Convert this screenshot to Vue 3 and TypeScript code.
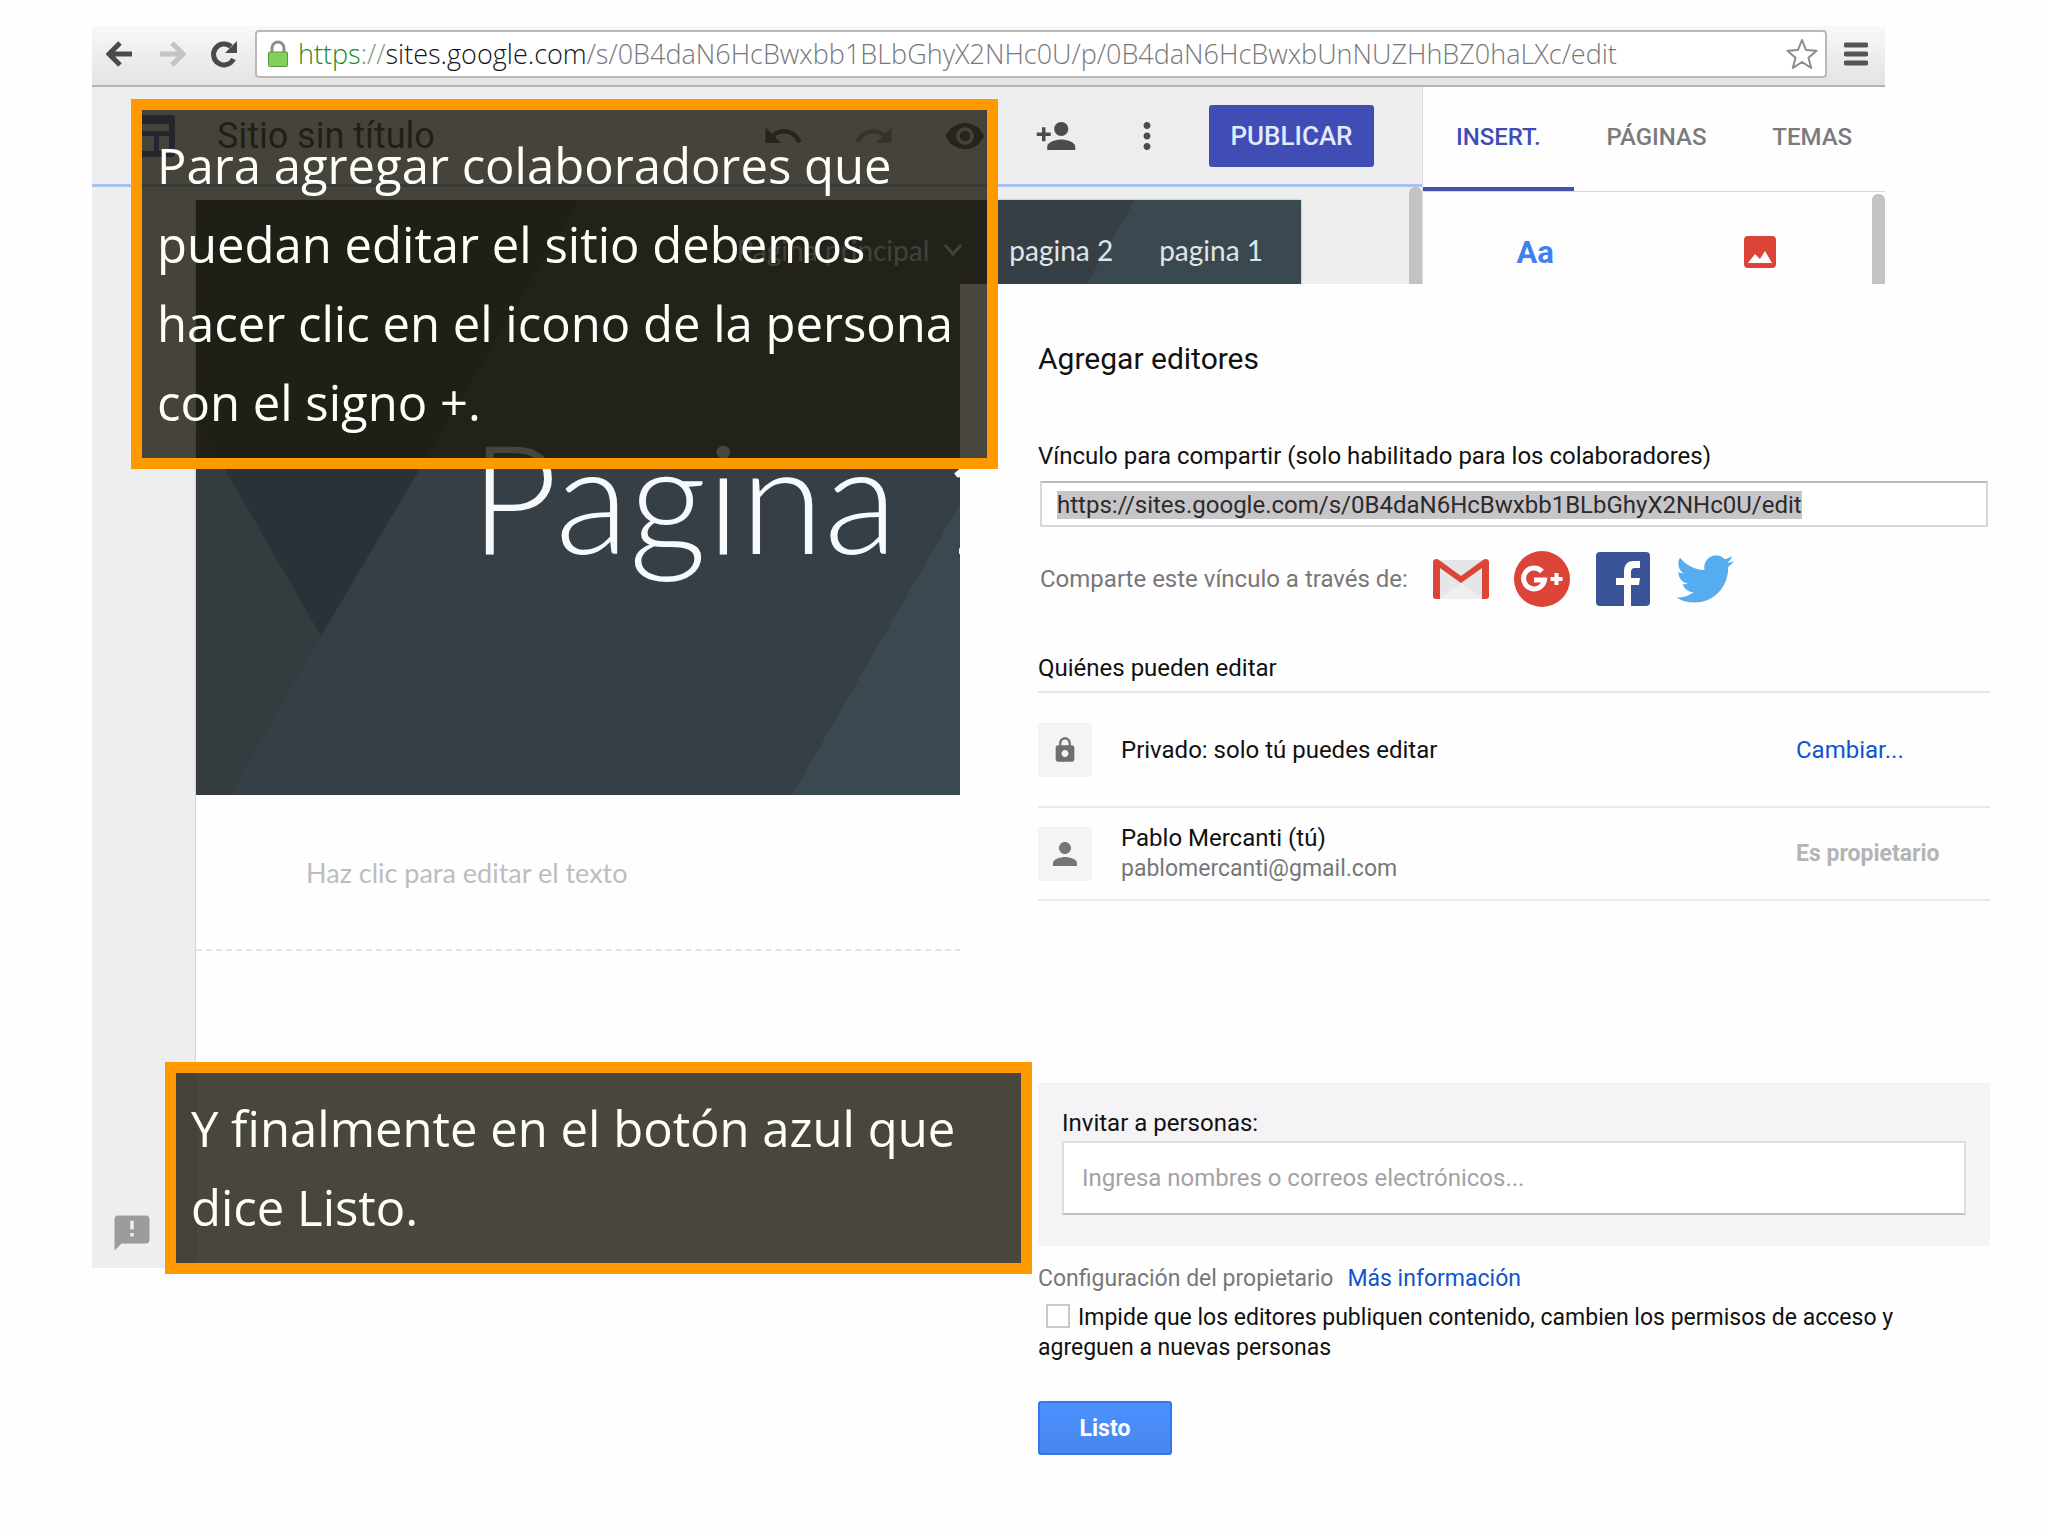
<script setup lang="ts">
import { onMounted, ref } from 'vue'

const shareUrl = ref('https://sites.google.com/s/0B4daN6HcBwxbb1BLbGhyX2NHc0U/edit')
const invitees = ref('')
const restrictEditors = ref(false)
const linkField = ref<HTMLInputElement | null>(null)

const tabs = ['INSERT.', 'PÁGINAS', 'TEMAS']
const activeTab = ref(tabs[0])

// The share link is preselected so that it can be copied straight away.
onMounted(() => {
  linkField.value?.focus()
  linkField.value?.select()
})
</script>

<template>
  <main class="slide">
    <section class="browser">
      <div class="chrome">
        <div class="history">
          <button aria-label="Atrás">
            <svg width="28" height="30" viewBox="0 0 28 30"><path d="M26 15H5M14 4 3 15l11 11" fill="none" stroke="#4a4a4a" stroke-width="5" /></svg>
          </button>
          <button aria-label="Adelante">
            <svg width="28" height="30" viewBox="0 0 28 30"><path d="M2 15h21M14 4l11 11-11 11" fill="none" stroke="#c4c4c4" stroke-width="5" /></svg>
          </button>
          <button aria-label="Volver a cargar">
            <svg width="28" height="30" viewBox="0 0 28 30"><path d="M21 7.500A10.500 10.500 0 1 0 23.500 20" fill="none" stroke="#4a4a4a" stroke-width="5" /><path d="M27 2v12H15z" fill="#4a4a4a" /></svg>
          </button>
        </div>
        <div class="address">
          <svg class="lock" width="22" height="28" viewBox="0 0 22 28">
            <path d="M5 13V8a6 6 0 0 1 12 0v5" fill="none" stroke="#8c8c8c" stroke-width="3" />
            <rect x="1.500" y="12" width="19" height="14.500" rx="1" fill="#83cf5b" stroke="#5a9a3c" />
          </svg>
          <span class="url"><span class="scheme">https</span><span class="sep">://</span><span class="host">sites.google.com</span>/s/0B4daN6HcBwxbb1BLbGhyX2NHc0U/p/0B4daN6HcBwxbUnNUZHhBZ0haLXc/edit</span>
          <svg class="star" width="34" height="34" viewBox="0 0 34 34"><path d="M17 3l4 10 10.500.700-8 7 2.700 10.300L17 25l-9.200 6 2.700-10.300-8-7L13 13z" fill="#fff" stroke="#8b8b8e" stroke-width="2" stroke-linejoin="round" /></svg>
        </div>
        <button aria-label="Menú">
          <svg width="24" height="24" viewBox="0 0 24 24"><path d="M2 3h20M2 12h20M2 21h20" stroke="#555" stroke-width="5" stroke-linecap="round" /></svg>
        </button>
      </div>

      <div class="app">
        <div class="editor">
          <header class="app-bar">
            <svg class="logo" width="42" height="42" viewBox="0 0 42 42">
              <path fill="#3f51b5" fill-rule="evenodd" d="M3 0h36a3 3 0 0 1 3 3v36a3 3 0 0 1-3 3H3a3 3 0 0 1-3-3V3a3 3 0 0 1 3-3zM5 9v7h31V9zM5 21v15h16V21zM26 21v15h10V21z" />
            </svg>
            <span class="site-name">Sitio sin título</span>
            <div class="tools">
              <button class="tool" aria-label="Deshacer">
                <svg viewBox="0 0 24 24"><path d="M12.500 8c-2.650 0-5.050.990-6.900 2.600L2 7v9h9l-3.620-3.620c1.390-1.160 3.160-1.880 5.120-1.880 3.540 0 6.550 2.310 7.600 5.500l2.370-.780C21.080 11.030 17.150 8 12.500 8z" /></svg>
              </button>
              <button class="tool faded" aria-label="Rehacer">
                <svg viewBox="0 0 24 24"><path d="M18.400 10.600C16.550 8.990 14.150 8 11.500 8c-4.650 0-8.580 3.030-9.960 7.220L3.900 16c1.050-3.190 4.050-5.500 7.600-5.500 1.950 0 3.730.720 5.120 1.880L13 16h9V7z" /></svg>
              </button>
              <button class="tool" aria-label="Vista previa">
                <svg viewBox="0 0 24 24"><path d="M12 4.500C7 4.500 2.730 7.610 1 12c1.730 4.390 6 7.500 11 7.500s9.270-3.110 11-7.500c-1.730-4.390-6-7.500-11-7.500zM12 17c-2.760 0-5-2.240-5-5s2.240-5 5-5 5 2.240 5 5-2.240 5-5 5zm0-8c-1.660 0-3 1.340-3 3s1.340 3 3 3 3-1.340 3-3-1.340-3-3-3z" /></svg>
              </button>
              <button class="tool" aria-label="Agregar editores">
                <svg viewBox="0 0 24 24"><path d="M15 12c2.210 0 4-1.790 4-4s-1.790-4-4-4-4 1.790-4 4 1.790 4 4 4zm-9-2V7H4v3H1v2h3v3h2v-3h3v-2H6zm9 4c-2.670 0-8 1.340-8 4v2h16v-2c0-2.660-5.330-4-8-4z" /></svg>
              </button>
              <button class="tool" aria-label="Más">
                <svg viewBox="0 0 24 24"><path d="M12 8c1.100 0 2-.900 2-2s-.900-2-2-2-2 .900-2 2 .900 2 2 2zm0 2c-1.100 0-2 .900-2 2s.900 2 2 2 2-.900 2-2-.900-2-2-2zm0 6c-1.100 0-2 .900-2 2s.900 2 2 2 2-.900 2-2-.900-2-2-2z" /></svg>
              </button>
            </div>
            <button class="publish">PUBLICAR</button>
          </header>

          <div class="canvas">
            <aside class="gutter">
              <button class="feedback" aria-label="Enviar comentarios">
                <svg width="42" height="42" viewBox="0 0 24 24"><path fill="#9b9b9b" d="M20 2H4c-1.100 0-2 .900-2 2v18l4-4h14c1.100 0 2-.900 2-2V4c0-1.100-.900-2-2-2zm-7 12h-2v-2h2v2zm0-4h-2V5h2v5z" /></svg>
              </button>
            </aside>
            <article class="sheet">
              <div class="hero">
                <svg class="hero-art" viewBox="0 0 1105 595" preserveAspectRatio="none">
                  <path fill="#373f46" d="M0 0h1105v595H0z" />
                  <path fill="#353c40" d="M0 219 125 436 34 595H0z" />
                  <path fill="#2a3238" d="M0 0h383L125 436 0 219z" />
                  <path fill="#3a4850" d="M939 0h166v595H596z" />
                </svg>
                <nav class="site-nav">
                  <a href="#principal">Página principal</a>
                  <svg class="chevron" width="20" height="14" viewBox="0 0 20 14"><path d="m2 2 8 9 8-9" fill="none" stroke="#e3e8ea" stroke-width="3" /></svg>
                  <a href="#pagina-2">pagina 2</a>
                  <a href="#pagina-1">pagina 1</a>
                </nav>
                <h1 class="hero-title">Pagina 1</h1>
              </div>
              <p class="placeholder-text">Haz clic para editar el texto</p>
            </article>
            <div class="scroll canvas-scroll"></div>
          </div>
        </div>

        <aside class="panel">
          <div class="tabs">
            <button
              v-for="tab in tabs"
              :key="tab"
              class="tab"
              :class="{ active: tab === activeTab }"
              @click="activeTab = tab"
            >{{ tab }}</button>
          </div>
          <div class="panel-body">
            <button class="insert text-insert">Aa</button>
            <button class="insert" aria-label="Imágenes">
              <svg width="32" height="32" viewBox="0 0 32 32"><rect width="32" height="32" rx="4" fill="#db4437" /><path fill="#fff" d="m4 27 7-9 5 5 5-8 7 12z" /></svg>
            </button>
            <div class="scroll"></div>
          </div>
        </aside>
      </div>
    </section>

    <section class="dialog" aria-labelledby="dlg-title">
      <h2 id="dlg-title">Agregar editores</h2>

      <label for="share-link" class="link-label">Vínculo para compartir (solo habilitado para los colaboradores)</label>
      <input id="share-link" ref="linkField" v-model="shareUrl" class="link-field" type="text" readonly />

      <div class="share">
        <span class="muted">Comparte este vínculo a través de:</span>
        <a href="#gmail" aria-label="Gmail">
          <svg width="56" height="56" viewBox="0 0 56 56">
            <path fill="#e6e6e8" d="M3 9h50v39H3z" /><path fill="#d4d5d8" d="m8 48 20-18 20 18z" /><path fill="#efeff0" d="M6 48 28 31l22 17z" />
            <path fill="#db4437" d="M0 11c0-3 4-4 6-2l22 16L50 9c2-2 6-1 6 2v34c0 2-1 3-3 3h-4V17L28 32 7 17v31H3c-2 0-3-1-3-3z" />
          </svg>
        </a>
        <a href="#gplus" aria-label="Google+">
          <svg width="56" height="56" viewBox="0 0 56 56">
            <circle cx="28" cy="28" r="28" fill="#db4437" />
            <path d="M28 20.500A10.500 10.500 0 1 0 30.500 29H20" fill="none" stroke="#fff" stroke-width="5" />
            <path d="M42.500 22v12M36.500 28h12" stroke="#fff" stroke-width="4" />
          </svg>
        </a>
        <a href="#facebook" aria-label="Facebook">
          <svg width="56" height="56" viewBox="0 0 56 56">
            <rect x="1" y="1" width="54" height="54" rx="4" fill="#3b5499" />
            <path fill="#fff" d="M29 55V34h-8v-7h8v-6c0-8 4-11 10-11h6v7h-4c-4 0-5 1-5 5v5h9l-1 7h-8v21z" />
          </svg>
        </a>
        <a href="#twitter" aria-label="Twitter">
          <svg width="58" height="58" viewBox="0 0 24 24"><path fill="#55acee" d="M23.950 4.570a10 10 0 0 1-2.820.770 4.960 4.960 0 0 0 2.160-2.720c-.950.550-2 .950-3.130 1.180a4.920 4.920 0 0 0-8.380 4.480C7.690 8.090 4.070 6.130 1.640 3.160a4.820 4.820 0 0 0-.660 2.480c0 1.710.870 3.210 2.190 4.100a4.900 4.900 0 0 1-2.230-.620v.060a4.920 4.920 0 0 0 3.950 4.830 5 5 0 0 1-2.210.080 4.940 4.940 0 0 0 4.600 3.420A9.870 9.870 0 0 1 0 19.540a13.940 13.940 0 0 0 7.550 2.210c9.050 0 14-7.500 14-13.980 0-.210 0-.420-.020-.630a9.940 9.940 0 0 0 2.460-2.550z" /></svg>
        </a>
      </div>

      <h3>Quiénes pueden editar</h3>
      <ul class="people">
        <li class="access">
          <span class="avatar">
            <svg width="28" height="28" viewBox="0 0 24 24"><path fill="#6e6e70" d="M18 8h-1V6c0-2.760-2.240-5-5-5S7 3.240 7 6v2H6c-1.100 0-2 .900-2 2v10c0 1.100.900 2 2 2h12c1.100 0 2-.900 2-2V10c0-1.100-.900-2-2-2zm-6 10c-1.600 0-3-1.400-3-3s1.400-3 3-3 3 1.400 3 3-1.400 3-3 3zm3.100-10H8.900V6c0-1.710 1.390-3.100 3.100-3.100 1.710 0 3.100 1.390 3.100 3.100v2z" /></svg>
          </span>
          <span class="who">Privado: solo tú puedes editar</span>
          <span class="action"><a href="#cambiar">Cambiar...</a></span>
        </li>
        <li class="person">
          <span class="avatar">
            <svg width="36" height="36" viewBox="0 0 24 24"><path fill="#757578" d="M12 12c2.210 0 4-1.790 4-4s-1.790-4-4-4-4 1.790-4 4 1.790 4 4 4zm0 2c-2.670 0-8 1.340-8 4v2h16v-2c0-2.660-5.330-4-8-4z" /></svg>
          </span>
          <span class="who">Pablo Mercanti (tú)<br /><span class="muted email">pablomercanti@gmail.com</span></span>
          <span class="action owner">Es propietario</span>
        </li>
      </ul>

      <div class="invite">
        <label for="invitees">Invitar a personas:</label>
        <input id="invitees" v-model="invitees" type="text" placeholder="Ingresa nombres o correos electrónicos..." />
      </div>

      <p class="settings"><span class="muted">Configuración del propietario</span><a href="#mas">Más información</a></p>
      <label class="restrict">
        <input v-model="restrictEditors" type="checkbox" />Impide que los editores publiquen contenido, cambien los permisos de acceso y agreguen a nuevas personas
      </label>
      <button class="done">Listo</button>
    </section>

    <p class="callout callout-top">Para agregar colaboradores que puedan editar el sitio debemos hacer clic en el icono de la persona con el signo +.</p>
    <p class="callout callout-bottom">Y finalmente en el botón azul que dice Listo.</p>
  </main>
</template>

<style>
body {
  margin: 0;
  background: #fefefe;
}
</style>

<style scoped>
* {
  box-sizing: border-box;
}

button {
  padding: 0;
  border: 0;
  background: none;
  font-family: inherit;
}

svg {
  display: block;
}

p,
h1,
h2,
h3,
ul {
  margin: 0;
  padding: 0;
}

.slide {
  position: relative;
  display: grid;
  min-height: 100vh;
  overflow: hidden;
  font-family: Roboto, 'Liberation Sans', sans-serif;
}

.browser,
.dialog {
  grid-area: 1 / 1;
}

.browser {
  display: flex;
  flex-direction: column;
  align-self: start;
  margin: 26px 163px 0 92px;
}

.chrome {
  display: flex;
  align-items: center;
  height: 61px;
  padding: 0 17px 4px 14px;
  gap: 17px;
  border-bottom: 2px solid #b4b4b4;
  background: linear-gradient(#f8f8f8, #e4e3e4);
}

.history {
  display: flex;
  gap: 24px;
}

.address {
  display: flex;
  flex: 1;
  align-items: center;
  min-width: 0;
  height: 48px;
  padding: 0 6px 0 10px;
  gap: 9px;
  border: 2px solid #bab8bb;
  border-radius: 4px;
  background: #fff;
}

.url {
  flex: 1;
  color: #78787c;
  font-family: 'Open Sans', sans-serif;
  font-size: 27px;
  font-weight: 300;
  line-height: 40px;
  white-space: nowrap;
}

.scheme {
  color: #1e8a1e;
}

.sep {
  color: #79a079;
}

.host {
  color: #16161a;
}

.app {
  display: flex;
}

.editor {
  flex: 1;
  min-width: 0;
}

.app-bar {
  display: flex;
  align-items: center;
  height: 100px;
  padding: 0 48px 0 41px;
  border-bottom: 3px solid #a9c1ee;
  background: #eeedee;
}

.site-name {
  flex: 1;
  margin-left: 42px;
  color: #333;
  font-size: 36px;
}

.tools {
  display: flex;
  gap: 49px;
  margin-right: 41px;
}

.tool svg {
  width: 42px;
  height: 42px;
  fill: #4c4c4e;
}

.faded svg {
  fill: #a0a0a0;
}

.publish {
  width: 165px;
  height: 62px;
  border-radius: 3px;
  background: #3f4db5;
  color: #e3e8fa;
  font-size: 26px;
  font-weight: 500;
}

.canvas {
  display: flex;
  height: 1081px;
  background: #eee;
}

.gutter {
  display: flex;
  align-items: flex-end;
  width: 104px;
  padding: 0 0 14px 19px;
}

.sheet {
  flex: 1;
  margin-top: 13px;
  background: #fefefe;
  box-shadow: 0 0 2px #aaa;
}

.hero {
  position: relative;
  height: 595px;
}

.hero-art {
  position: absolute;
  inset: 0;
  width: 100%;
  height: 100%;
}

.site-nav {
  position: relative;
  display: flex;
  align-items: center;
  justify-content: flex-end;
  padding: 32px 38px 0 0;
  gap: 46px;
  font-family: Lato, sans-serif;
  font-size: 28px;
  line-height: 36px;
}

.site-nav a {
  color: #dfe5e8;
  text-decoration: none;
}

.chevron {
  margin-left: -32px;
}

.hero-title {
  position: relative;
  margin-top: 139px;
  color: #f7fafc;
  font-family: Lato, sans-serif;
  font-size: 152px;
  font-weight: 300;
  line-height: 176px;
  text-align: center;
}

.placeholder-text {
  height: 156px;
  padding: 62px 0 0 110px;
  border-bottom: 2px dashed #e2e2ec;
  color: #bdbdc0;
  font-family: Lato, sans-serif;
  font-size: 27px;
  line-height: 32px;
}

.scroll {
  width: 13px;
  border-radius: 6px 6px 0 0;
  background: #c3c2c4;
}

.canvas-scroll {
  margin-left: 108px;
}

.panel {
  display: flex;
  flex-direction: column;
  width: 463px;
  border-left: 1px solid #ddd;
  background: #fefefe;
}

.tabs {
  display: flex;
  height: 105px;
  border-bottom: 1px solid #d8d8d8;
}

.tab {
  flex: 1 1 auto;
  border-bottom: 4px solid transparent;
  color: #7b7b7e;
  font-size: 24px;
  font-weight: 500;
}

.tab.active {
  border-bottom-color: #4750ae;
  color: #3f4db5;
}

.panel-body {
  display: flex;
  flex: 1;
  align-items: flex-start;
}

.insert {
  flex: 1;
  height: 44px;
  margin-top: 38px;
}

.insert svg {
  margin: 0 auto;
}

.text-insert {
  color: #3f80f0;
  font-size: 31px;
  font-weight: 700;
}

.panel-body .scroll {
  align-self: stretch;
  margin-top: 2px;
}

.dialog {
  display: flex;
  flex-direction: column;
  align-items: stretch;
  z-index: 1;
  margin: 284px 0 0 46.875%;
  padding: 57px 58px 81px 78px;
  background: #fefefe;
  color: #111;
  font-size: 24px;
  line-height: 30px;
}

.dialog h2 {
  font-size: 30px;
  font-weight: 400;
  line-height: 36px;
}

.dialog a {
  color: #1155cc;
  text-decoration: none;
}

.dialog input {
  font: inherit;
}

.muted {
  color: #777779;
}

.link-label {
  margin-top: 64px;
}

.link-field {
  height: 46px;
  margin: 10px 2px 0;
  padding: 2px 15px 0;
  border: 2px solid #d9d7da;
  border-top-color: #bdbbbe;
  outline: 0;
  background: #fff;
  color: #333;
}

.link-field::selection {
  background: #c8c5c9;
  color: #2b2b2b;
}

.share {
  display: flex;
  align-items: center;
  height: 56px;
  margin-top: 24px;
  gap: 25px;
  padding-left: 2px;
}

.dialog h3 {
  margin-top: 46px;
  padding-bottom: 8px;
  border-bottom: 2px solid #e6e5e7;
  font-size: 24px;
  font-weight: 400;
}

.people {
  list-style: none;
}

.people li {
  display: flex;
  align-items: center;
  border-bottom: 2px solid #e9e8eb;
}

.access {
  height: 115px;
}

.person {
  height: 93px;
}

.avatar {
  display: flex;
  align-items: center;
  justify-content: center;
  width: 54px;
  height: 54px;
  background: #f5f3f6;
}

.who {
  flex: 1;
  margin-left: 29px;
}

.email,
.settings,
.restrict {
  font-size: 23px;
}

.action {
  width: 194px;
}

.owner {
  color: #b4b3b6;
  font-size: 23px;
  font-weight: 700;
}

.invite {
  display: flex;
  flex-direction: column;
  margin-top: 182px;
  padding: 25px 24px 31px;
  background: #f5f3f6;
}

.invite input {
  height: 74px;
  margin-top: 3px;
  padding: 0 18px;
  border: 2px solid #dddcdf;
  border-bottom-color: #c2c1c4;
  background: #fff;
}

.invite input::placeholder {
  color: #a3a2a5;
}

.settings {
  display: flex;
  margin-top: 18px;
  gap: 14px;
}

.restrict {
  margin-top: 9px;
}

.restrict input {
  width: 24px;
  height: 24px;
  margin: 0 8px;
  border: 2px solid #c9c8cb;
  background: #fff;
  appearance: none;
  vertical-align: -3px;
}

.done {
  align-self: flex-start;
  width: 134px;
  height: 54px;
  margin-top: 38px;
  border: 2px solid #3079ed;
  border-radius: 3px;
  background: linear-gradient(#4d90fe, #4787ed);
  color: #fff;
  font-size: 23px;
  font-weight: 700;
}

.callout {
  position: absolute;
  z-index: 2;
  width: 867px;
  padding: 16px 15px;
  border: 11px solid #f90;
  background: rgba(29, 27, 16, 0.81);
  background-clip: padding-box;
  color: #fffffa;
  font-family: 'Open Sans', sans-serif;
  font-size: 49px;
  font-weight: 500;
  line-height: 79px;
}

.callout-top {
  top: 99px;
  left: 131px;
}

.callout-bottom {
  top: 1062px;
  left: 165px;
}
</style>
